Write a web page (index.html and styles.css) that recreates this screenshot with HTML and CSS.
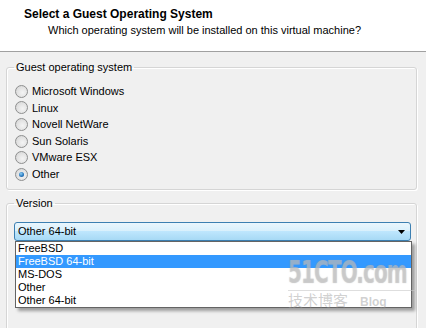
FILE: index.html
```html
<!DOCTYPE html>
<html>
<head>
<meta charset="utf-8"/>
<link rel="stylesheet" href="styles.css">
</head>
<body>

<div class="header">
  <div class="title">Select a Guest Operating System</div>
  <div class="subtitle">Which operating system will be installed on this virtual machine?</div>
</div>

<div class="content">

<fieldset class="group os">
  <legend>Guest operating system</legend>
  <div class="radio"><span class="dot"></span>Microsoft Windows</div>
  <div class="radio"><span class="dot"></span>Linux</div>
  <div class="radio"><span class="dot"></span>Novell NetWare</div>
  <div class="radio"><span class="dot"></span>Sun Solaris</div>
  <div class="radio"><span class="dot"></span>VMware ESX</div>
  <div class="radio"><span class="dot checked"></span>Other</div>
</fieldset>

<fieldset class="group version">
  <legend>Version</legend>
  <div class="combo">
    <span>Other 64-bit</span>
    <svg class="arrow" width="7" height="4" viewBox="0 0 7 4"><path d="M0 0H7L3.5 4Z" fill="#000"/></svg>
    <ul class="droplist">
      <li>FreeBSD</li>
      <li class="sel">FreeBSD 64-bit</li>
      <li>MS-DOS</li>
      <li>Other</li>
      <li>Other 64-bit</li>
    </ul>
    <div class="mark">
      <div class="big">51CTO.com</div>
      <div class="small"><span>技术博客</span><span class="blog">Blog</span></div>
    </div>
  </div>
</fieldset>

</div>

</body>
</html>
```

FILE: styles.css
```css
body {
  margin: 0px;
  padding: 0px;
  width: 426px;
  height: 328px;
  overflow: hidden;
  background: #f0f0f0;
  font-family: "Liberation Sans", Arial, sans-serif;
  font-size: 11px;
  color: #000;
}

.header {
  background: #fff;
  height: 52px;
  border-bottom: 1px solid #a0a0a0;
  box-sizing: border-box;
  padding-top: 7px;
}

.header .title {
  font-weight: bold;
  font-size: 12px;
  margin-left: 24px;
  line-height: 14px;
}

.header .subtitle {
  margin-left: 48px;
  margin-top: 2px;
  line-height: 14px;
}

.content {
  padding: 9px 9px 0px 6px;
  height: 267px;
  overflow: hidden;
}

fieldset.group {
  margin: 0px;
  border: 1px solid #d5d5d5;
  border-radius: 3px;
  box-shadow: inset 1px 1px 0 #fff, 1px 1px 0 #fff;
  padding: 0px 5px 0px 7px;
}

fieldset.group legend {
  padding: 0px 2px;
  margin-left: 0px;
  line-height: 13px;
  color: #000;
}

fieldset.os {
  height: 118px;
  padding-top: 9px;
}

fieldset.version {
  margin-top: 7px;
  height: 140px;
  padding-top: 12px;
}

.radio {
  height: 16.6px;
  line-height: 16.6px;
  display: flex;
  align-items: center;
  padding-left: 1px;
}

.dot {
  width: 11px;
  height: 11px;
  border-radius: 50%;
  border: 1px solid #8e8f8f;
  background: radial-gradient(circle at 60% 60%, #f4f4f4 0%, #e2e2e2 55%, #cfcfcf 100%);
  margin-right: 4px;
  box-sizing: content-box;
  position: relative;
}

.dot.checked::after {
  content: "";
  position: absolute;
  left: 3px;
  top: 3px;
  width: 5px;
  height: 5px;
  border-radius: 50%;
  background: radial-gradient(circle at 40% 35%, #8fd0f5 0%, #2a7ac0 55%, #164a87 100%);
}

.combo {
  position: relative;
  height: 19px;
  box-sizing: border-box;
  border: 1px solid #3c7fb1;
  border-radius: 3px;
  background: linear-gradient(#eaf6fd 0%, #d9f0fc 45%, #bee6fd 50%, #a7d9f5 100%);
  padding-left: 3px;
  line-height: 17px;
  display: flex;
  align-items: center;
}

.combo .arrow {
  position: absolute;
  right: 5px;
  top: 7px;
}

ul.droplist {
  position: absolute;
  left: 0px;
  top: 18px;
  width: 397px;
  margin: 0px;
  padding: 0px;
  list-style: none;
  background: #fff;
  border: 1px solid #646464;
  box-sizing: border-box;
  box-shadow: 3px 3px 3px rgba(0, 0, 0, 0.35);
  z-index: 2;
}

ul.droplist li {
  height: 13px;
  line-height: 13px;
  padding-left: 2px;
}

ul.droplist li.sel {
  background: #3399ff;
  color: #fff;
}

.mark {
  position: absolute;
  left: 273px;
  top: 33px;
  z-index: 3;
  color: rgba(200, 200, 200, 0.5);
  pointer-events: none;
}

.mark .big {
  font-family: "DejaVu Sans Condensed", "DejaVu Sans", sans-serif;
  font-weight: bold;
  font-size: 24px;
  line-height: 33px;
  letter-spacing: -1px;
  transform: scale(0.93, 1.35);
  transform-origin: left center;
  text-shadow: 0 0 1px rgba(150, 150, 150, 0.5);
}

.mark .small {
  font-family: "Noto Sans CJK SC", sans-serif;
  font-size: 15px;
  line-height: 18px;
  margin-top: 1px;
  border-top: 1px solid rgba(200, 200, 200, 0.6);
  color: rgba(150, 150, 150, 0.45);
}

.mark .blog {
  font-family: "Liberation Sans", sans-serif;
  font-weight: bold;
  font-size: 12px;
  margin-left: 12px;
}
```
